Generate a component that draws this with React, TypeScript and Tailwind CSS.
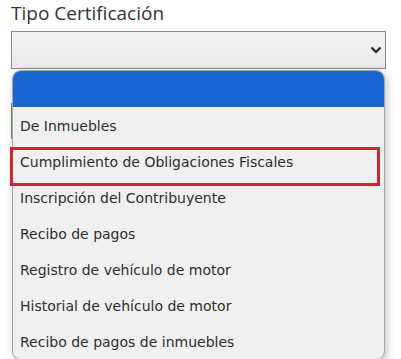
const options = [
  "De Inmuebles",
  "Cumplimiento de Obligaciones Fiscales",
  "Inscripción del Contribuyente",
  "Recibo de pagos",
  "Registro de vehículo de motor",
  "Historial de vehículo de motor",
  "Recibo de pagos de inmuebles",
];

function Chevron() {
  return (
    <svg width="12" height="8" viewBox="0 0 12 8" className="text-[#222]">
      <path d="M1.5 1.5 L6 6 L10.5 1.5" fill="none" stroke="currentColor" strokeWidth="2.2" />
    </svg>
  );
}

export default function App() {
  const selected = 1;

  return (
    <div className="w-[401px] h-[359px] bg-white overflow-hidden [font-family:'DejaVu_Sans',Verdana,sans-serif] text-[#222]">
      <div className="pl-[11px] pt-[1px] [font-family:'Open_Sans',sans-serif] text-[19px] leading-[25px] text-[#333]">
        Tipo Certificación
      </div>

      <div className="relative ml-[11px] mt-[5px] w-[375px]">
        <div className="h-[38px] border border-[#8a8a8a] bg-gradient-to-b from-[#f4f4f4] to-[#e9e9e9] flex items-center justify-end pr-[3px]">
          <Chevron />
        </div>

        <div className="absolute left-0 top-[72px] w-[1px] h-[36px] bg-[#6a9a5a]" />

        <div className="relative mt-[1px] ml-[1px] w-[373px] rounded-[9px] border border-[#a8a8a8] bg-[#f0f0f0] shadow-[2px_3px_8px_rgba(0,0,0,0.25)] overflow-hidden">
          <div className="h-[36px] bg-[#1b65d2]" />
          {options.map((opt) => (
            <div key={opt} className="h-[36px] flex items-center pl-[7px] pt-[2px] text-[14px] text-[#2e2e2e]">
              {opt}
            </div>
          ))}
        </div>

        {selected === 1 && (
          <div className="absolute left-[-1px] top-[116px] w-[370px] h-[39px] border-[3px] border-[#d0262f]" />
        )}
      </div>
    </div>
  );
}
